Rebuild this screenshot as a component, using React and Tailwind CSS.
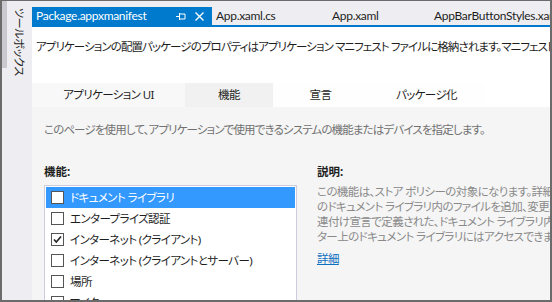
const FONT = "font-['Noto_Sans','Noto_Sans_CJK_JP',sans-serif]";

const rows = [
  { label: "ドキュメント ライブラリ", checked: false, selected: true },
  { label: "エンタープライズ認証", checked: false },
  { label: "インターネット (クライアント)", checked: true },
  { label: "インターネット (クライアントとサーバー)", checked: false },
  { label: "場所", checked: false },
  { label: "マイク", checked: false },
];

const tabs = [
  { label: "アプリケーション UI", w: "w-[153px]", bg: "bg-[#f8f8f8]" },
  { label: "機能", w: "w-[88px]", bg: "bg-[#f1f1f1]" },
  { label: "宣言", w: "w-[95px]", bg: "bg-[#fefefe]" },
  { label: "パッケージ化", w: "w-[117px]", bg: "bg-[#fefefe]" },
];

function Checkbox({ checked }) {
  return (
    <span className="w-[13px] h-[13px] shrink-0 bg-white border border-[#555] flex items-center justify-center">
      {checked && (
        <svg width="11" height="11" viewBox="0 0 11 11">
          <path d="M2 5.5 L4.3 8 L9 2.5" fill="none" stroke="#222" strokeWidth="1.6" />
        </svg>
      )}
    </span>
  );
}

export default function App() {
  return (
    <div
      className={`w-[552px] h-[302px] overflow-hidden border-2 border-t border-[#6b6b6b] bg-[#eeeef2] flex ${FONT} [font-feature-settings:'palt'] text-[11.5px] tracking-[-0.6px]`}
    >
      {/* toolbox side tab */}
      <div className="w-[30px] shrink-0 flex items-start">
        <div className="w-[5px] h-[67px] bg-[#c9c9cf]" />
        <div className="ml-[5px] mt-[7px] [writing-mode:vertical-rl] [text-orientation:sideways] text-[11px] tracking-[-0.3px] leading-[14px] text-[#1e1e1e]">
          ツールボックス
        </div>
      </div>

      <div className="flex-1 flex flex-col min-w-0">
        {/* document tabs */}
        <div className="h-[24px] flex items-end whitespace-nowrap overflow-hidden text-[12px] tracking-[-0.3px] font-['Lato','Noto_Sans',sans-serif]">
          <div className="h-[18px] w-[180px] shrink-0 bg-[#007acc] text-white flex items-center pl-[4px] pr-[8px]">
            <span className="flex-1 leading-none">Package.appxmanifest</span>
            <svg width="10" height="9" viewBox="0 0 10 9" className="mr-[9px]">
              <path d="M0 4.5 H3.5 M3.5 1 V8 M3.5 2 H9 V7 H3.5" fill="none" stroke="#fff" strokeWidth="1" />
            </svg>
            <svg width="9" height="9" viewBox="0 0 9 9">
              <path d="M0.5 0.5 L8.5 8.5 M8.5 0.5 L0.5 8.5" stroke="#fff" strokeWidth="1.3" />
            </svg>
          </div>
          <div className="h-[18px] flex items-center text-[#1e1e1e] leading-none">
            <span className="shrink-0 ml-[4px] w-[116px]">App.xaml.cs</span>
            <span className="shrink-0 w-[102px]">App.xaml</span>
            <span className="shrink-0">AppBarButtonStyles.xaml</span>
          </div>
        </div>
        <div className="h-[2px] bg-[#007acc]" />

        {/* designer */}
        <div className="flex-1 bg-white flex flex-col min-h-0">
          <div className="h-[40px] pt-[12px] pl-[4px] whitespace-nowrap overflow-hidden text-[#1e1e1e] leading-[16px] tracking-[-0.9px]">
            アプリケーションの配置パッケージのプロパティはアプリケーション マニフェスト ファイルに格納されます。マニフェスト ファイルを使用して
          </div>
          <div className="h-[16px]" />
          <div className="h-[24px] flex text-[#1e1e1e]">
            {tabs.map((t) => (
              <div key={t.label} className={`${t.w} ${t.bg} flex items-center justify-center`}>
                {t.label}
              </div>
            ))}
          </div>

          <div className="flex-1 bg-[#f5f5f5] pl-[12px] pt-[15px] min-h-0">
            <div className="leading-[16px] text-[#717171] whitespace-nowrap tracking-[-0.85px]">
              このページを使用して、アプリケーションで使用できるシステムの機能またはデバイスを指定します。
            </div>
            <div className="flex gap-[20px] mt-[26px]">
              <div className="w-[253px] shrink-0">
                <div className="font-bold leading-[16px] text-[#1e1e1e] tracking-normal">機能:</div>
                <div className="mt-[5px] border border-[#ccccdc] bg-white p-[1px] h-[140px]">
                  {rows.map((r) => (
                    <div
                      key={r.label}
                      className={`h-[21px] flex items-center gap-[6px] pl-[5px] whitespace-nowrap ${
                        r.selected ? "bg-[#3399ff] text-white" : "text-[#1e1e1e]"
                      }`}
                    >
                      <Checkbox checked={r.checked} />
                      <span>{r.label}</span>
                    </div>
                  ))}
                </div>
              </div>
              <div className="flex-1 min-w-0 overflow-hidden">
                <div className="font-bold leading-[16px] text-[#1e1e1e] tracking-normal">説明:</div>
                <div className="mt-[4px] text-[#8a8a8a] leading-[15px] whitespace-nowrap">
                  <div>この機能は、ストア ポリシーの対象になります。詳細</div>
                  <div>のドキュメント ライブラリ内のファイルを追加、変更、</div>
                  <div>連付け宣言で定義された、ドキュメント ライブラリ内</div>
                  <div>ター上のドキュメント ライブラリにはアクセスできません</div>
                </div>
                <div className="mt-[7px] text-[#0e70c0] underline leading-[16px]">詳細</div>
              </div>
            </div>
          </div>
        </div>
      </div>
    </div>
  );
}
